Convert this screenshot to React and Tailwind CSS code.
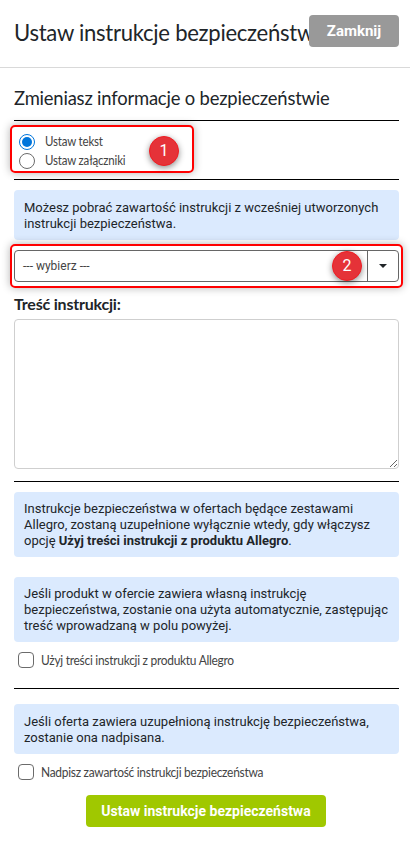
import React from 'react';

const heading = "font-['Lato',sans-serif]";

function Info({ className = '', children }) {
  return (
    <div className={`bg-[#dbeafe] rounded px-[10px] text-[13px] leading-[16px] text-[#212529] ${className}`}>
      {children}
    </div>
  );
}

function Badge({ children, className = '' }) {
  return (
    <span className={`absolute w-[30px] h-[30px] rounded-full bg-[#e53238] border border-[#f01c22] text-white text-[16px] flex items-center justify-center shadow-[0_2px_6px_rgba(0,0,0,0.45)] ${className}`}>
      {children}
    </span>
  );
}

function Narrow({ children, className = '' }) {
  return <span className={`${heading} inline-block origin-left whitespace-nowrap scale-x-[0.92] ${className}`}>{children}</span>;
}

function Check({ label }) {
  return (
    <label className="flex items-center gap-[7px] h-[16px] pl-[4px]">
      <span className="w-[16px] h-[16px] rounded-[4px] border border-[#6b6b6b] bg-white shrink-0" />
      <Narrow className="text-[13px] leading-[16px] tracking-[-0.3px] text-[#444]">{label}</Narrow>
    </label>
  );
}

function Radio({ label, checked }) {
  return (
    <label className="flex items-center gap-[10px] h-[16px] pl-[5px]">
      {checked ? (
        <span className="w-[16px] h-[16px] rounded-full border border-[#0075db] flex items-center justify-center">
          <span className="w-[10px] h-[10px] rounded-full bg-[#0075db]" />
        </span>
      ) : (
        <span className="w-[16px] h-[16px] rounded-full border border-[#6b6b6b]" />
      )}
      <Narrow className="text-[12.5px] leading-[16px] tracking-[-0.2px] text-[#444]">{label}</Narrow>
    </label>
  );
}

export default function App() {
  return (
    <div className="w-[410px] h-[842px] bg-white overflow-hidden font-['Roboto',sans-serif] text-[#212529]">
      <div className="relative h-[68px] border-b border-[#d9d9d9] overflow-hidden">
        <h1 className="pl-[14px] pt-[16px] text-[24px] leading-[32px] tracking-[-0.3px] text-[#212529] whitespace-nowrap">
          <Narrow className="scale-x-[0.9]">Ustaw instrukcje bezpieczeństwa</Narrow>
        </h1>
        <button className="absolute left-[309px] top-[15px] w-[90px] h-[32px] rounded bg-[#999999] text-white text-[15px] font-bold">
          Zamknij
        </button>
      </div>

      <div className="pl-[14px] pr-[11px]">
        <h2 className="h-[53px] pt-[15px] text-[20px] leading-[28px] tracking-[-0.2px] text-[#212529] border-b border-black">
          <Narrow>Zmieniasz informacje o bezpieczeństwie</Narrow>
        </h2>

        <div className="relative h-[59px] pt-[13px] border-b border-black flex flex-col gap-[3px]">
          <Radio label="Ustaw tekst" checked />
          <Radio label="Ustaw załączniki" />
          <span className="absolute left-[-4px] top-[4px] w-[184px] h-[48px] rounded-[5px] border-2 border-[#ff0000] shadow-[0_0_8px_rgba(0,0,0,0.3)]" />
          <Badge className="left-[135px] top-[15px]">1</Badge>
        </div>

        <Info className="mt-[10px] h-[50px] pt-[10px]">
          Możesz pobrać zawartość instrukcji z wcześniej utworzonych instrukcji bezpieczeństwa.
        </Info>

        <div className="relative mt-[10px] h-[32px] flex rounded border border-[#666] text-[12px] text-[#444]">
          <div className="flex-1 flex items-center pl-[8px]">--- wybierz ---</div>
          <div className="w-[31px] border-l border-[#666] flex items-center justify-center">
            <span className="w-0 h-0 border-x-[4px] border-x-transparent border-t-[4px] border-t-[#212529]" />
          </div>
          <span className="absolute left-[-5px] top-[-7px] right-[-5px] bottom-[-7px] rounded-[5px] border-2 border-[#ff0000] shadow-[0_0_8px_rgba(0,0,0,0.3)]" />
          <Badge className="left-[317px] top-[0px]">2</Badge>
        </div>

        <div className={`${heading} mt-[12px] text-[16px] leading-[20px] font-bold tracking-[-0.2px] text-[#212529]`}>Treść instrukcji:</div>
        <textarea className="block mt-[5px] w-full h-[150px] rounded border border-[#cfcfcf] bg-white outline-none" />

        <div className="mt-[12px] border-t border-black" />

        <Info className="mt-[10px] h-[65px] pt-[9px]">
          Instrukcje bezpieczeństwa w ofertach będące zestawami Allegro, zostaną uzupełnione wyłącznie wtedy, gdy włączysz opcję <b>Użyj treści instrukcji z produktu Allegro</b>.
        </Info>

        <Info className="mt-[20px] h-[65px] pt-[9px]">
          Jeśli produkt w ofercie zawiera własną instrukcję bezpieczeństwa, zostanie ona użyta automatycznie, zastępując treść wprowadzaną w polu powyżej.
        </Info>

        <div className="mt-[10px]"><Check label="Użyj treści instrukcji z produktu Allegro" /></div>

        <div className="mt-[20px] border-t border-black" />

        <Info className="mt-[15px] h-[50px] pt-[10px]">
          Jeśli oferta zawiera uzupełnioną instrukcję bezpieczeństwa, zostanie ona nadpisana.
        </Info>

        <div className="mt-[10px]"><Check label="Nadpisz zawartość instrukcji bezpieczeństwa" /></div>

        <div className="mt-[15px] pr-[1px] flex justify-center">
          <button className="w-[240px] h-[32px] rounded bg-[#a0c800] text-white text-[14px] font-bold">
            Ustaw instrukcje bezpieczeństwa
          </button>
        </div>
      </div>
    </div>
  );
}
